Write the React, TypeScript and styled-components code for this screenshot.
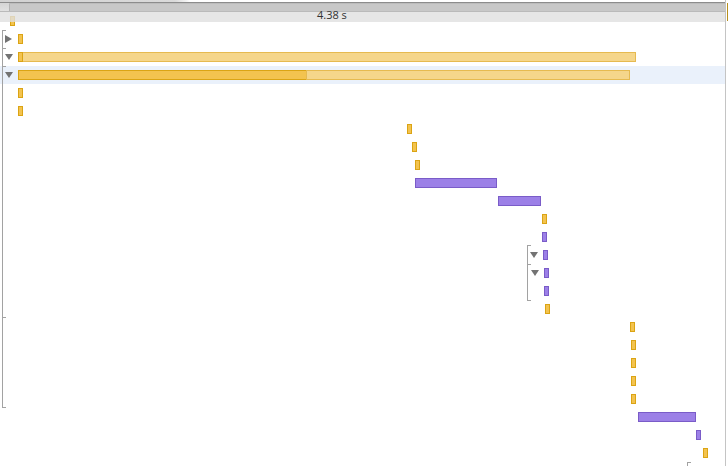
import React from "react";
import styled, { createGlobalStyle } from "styled-components";

const Global = createGlobalStyle`
  html, body { margin: 0; padding: 0; background: #fff; }
  body { font-family: "Open Sans", "Liberation Sans", sans-serif; overflow: hidden; }
`;

type Kind = "y" | "yl" | "p";
type BarData = { l: number; w: number; k: Kind };
type RowData = { bars: BarData[]; tri?: "r" | "d"; triX?: number; sel?: boolean };

const Page = styled.div`
  position: relative;
  width: 728px;
  height: 466px;
  overflow: hidden;
  background: #fff;
`;

const Header = styled.div`
  position: absolute;
  top: 0;
  left: 0;
  width: 725px;
  height: 22px;
  display: flex;
  flex-direction: column;
  z-index: 3;
`;

const HeaderTop = styled.div`
  height: 2px;
  background: linear-gradient(to right, #d2d2d2 0, #dadada 175px, #f2f2f2 186px, #fff 190px);
  border-bottom: 1px solid #8c8c8c;
`;

const HeaderBar = styled.div`
  height: 8px;
  display: flex;
  background: linear-gradient(to bottom, #d4d4d4, #e0e0e0);
  border-bottom: 1px solid #bababa;
`;

const HeaderBarFill = styled.div`
  flex: 1;
  margin-left: 9px;
  background: #c8c8c8;
  border-top: 1px solid #bcbcbc;
  border-left: 1px solid #b3b3b3;
  border-top-left-radius: 1px;
`;

const HeaderStrip = styled.div`
  height: 10px;
  background: rgba(224, 224, 224, 0.8);
`;

const TimeLabel = styled.div`
  position: absolute;
  top: 8px;
  left: 317px;
  font-size: 11px;
  line-height: 14px;
  color: #333;
  white-space: nowrap;
`;

const Rows = styled.div`
  display: flex;
  flex-direction: column;
  padding-top: 12px;
`;

const Row = styled.div<{ $sel?: boolean }>`
  position: relative;
  height: 18px;
  width: 725px;
  background: ${(p) => (p.$sel ? "#eaf1fb" : "transparent")};
`;

const barColors: Record<Kind, { bg: string; bd: string }> = {
  y: { bg: "#f3c34f", bd: "#dba414" },
  yl: { bg: "#f5d68b", bd: "#e6ba50" },
  p: { bg: "#9c80e7", bd: "#7a5cc8" },
};

const Bar = styled.div<{ $k: Kind }>`
  position: absolute;
  top: 4px;
  height: 10px;
  box-sizing: border-box;
  background: ${(p) => barColors[p.$k].bg};
  border: 1px solid ${(p) => barColors[p.$k].bd};
`;

const Toggle = styled.div<{ $dir: "r" | "d" }>`
  position: absolute;
  width: 0;
  height: 0;
  ${(p) =>
    p.$dir === "d"
      ? `top: 6px;
         border-left: 4px solid transparent;
         border-right: 4px solid transparent;
         border-top: 6px solid #737373;`
      : `top: 5px;
         border-top: 4px solid transparent;
         border-bottom: 4px solid transparent;
         border-left: 7px solid #737373;`}
`;

const VLine = styled.div`
  position: absolute;
  width: 1px;
  background: #a2a2a2;
  z-index: 2;
`;

const Tick = styled.div`
  position: absolute;
  height: 1px;
  width: 4px;
  background: #a2a2a2;
  z-index: 2;
`;

const RightRule = styled.div`
  position: absolute;
  top: 0;
  bottom: 0;
  left: 725px;
  width: 1px;
  background: #c4c4c4;
  z-index: 4;
`;

const GoldMark = styled.div`
  position: absolute;
  top: 3px;
  left: 727px;
  width: 1px;
  height: 18px;
  background: #b8901c;
  z-index: 4;
`;

const rows: RowData[] = [
  { bars: [{ l: 10, w: 5, k: "y" }] },
  { tri: "r", triX: 5, bars: [{ l: 18, w: 5, k: "y" }] },
  { tri: "d", triX: 5, bars: [{ l: 18, w: 618, k: "yl" }, { l: 18, w: 5, k: "y" }] },
  { tri: "d", triX: 5, sel: true, bars: [{ l: 18, w: 289, k: "y" }, { l: 306, w: 324, k: "yl" }] },
  { bars: [{ l: 18, w: 5, k: "y" }] },
  { bars: [{ l: 18, w: 5, k: "y" }] },
  { bars: [{ l: 407, w: 5, k: "y" }] },
  { bars: [{ l: 412, w: 5, k: "y" }] },
  { bars: [{ l: 415, w: 5, k: "y" }] },
  { bars: [{ l: 415, w: 82, k: "p" }] },
  { bars: [{ l: 498, w: 43, k: "p" }] },
  { bars: [{ l: 542, w: 5, k: "y" }] },
  { bars: [{ l: 542, w: 5, k: "p" }] },
  { tri: "d", triX: 530, bars: [{ l: 543, w: 5, k: "p" }] },
  { tri: "d", triX: 531, bars: [{ l: 544, w: 5, k: "p" }] },
  { bars: [{ l: 544, w: 5, k: "p" }] },
  { bars: [{ l: 545, w: 5, k: "y" }] },
  { bars: [{ l: 630, w: 5, k: "y" }] },
  { bars: [{ l: 631, w: 5, k: "y" }] },
  { bars: [{ l: 631, w: 5, k: "y" }] },
  { bars: [{ l: 631, w: 5, k: "y" }] },
  { bars: [{ l: 631, w: 5, k: "y" }] },
  { bars: [{ l: 638, w: 58, k: "p" }] },
  { bars: [{ l: 696, w: 5, k: "p" }] },
  { bars: [{ l: 703, w: 5, k: "y" }] },
  { bars: [] },
];

const brackets = [
  { x: 2, top: 30, bottom: 408, ticks: [30, 48, 66, 317, 407] },
  { x: 527, top: 245, bottom: 301, ticks: [245, 264, 300] },
  { x: 687, top: 462, bottom: 466, ticks: [462] },
];

export default function App() {
  return (
    <Page>
      <Global />
      <Rows>
        {rows.map((r, i) => (
          <Row key={i} $sel={r.sel}>
            {r.tri && <Toggle $dir={r.tri} style={{ left: r.triX }} />}
            {r.bars.map((b, j) => (
              <Bar key={j} $k={b.k} style={{ left: b.l, width: b.w }} />
            ))}
          </Row>
        ))}
      </Rows>
      {brackets.map((b, i) => (
        <React.Fragment key={i}>
          <VLine style={{ left: b.x, top: b.top, height: b.bottom - b.top }} />
          {b.ticks.map((t) => (
            <Tick key={t} style={{ left: b.x, top: t }} />
          ))}
        </React.Fragment>
      ))}
      <Header>
        <HeaderTop />
        <HeaderBar>
          <HeaderBarFill />
        </HeaderBar>
        <HeaderStrip />
        <TimeLabel>4.38 s</TimeLabel>
      </Header>
      <RightRule />
      <GoldMark />
    </Page>
  );
}
